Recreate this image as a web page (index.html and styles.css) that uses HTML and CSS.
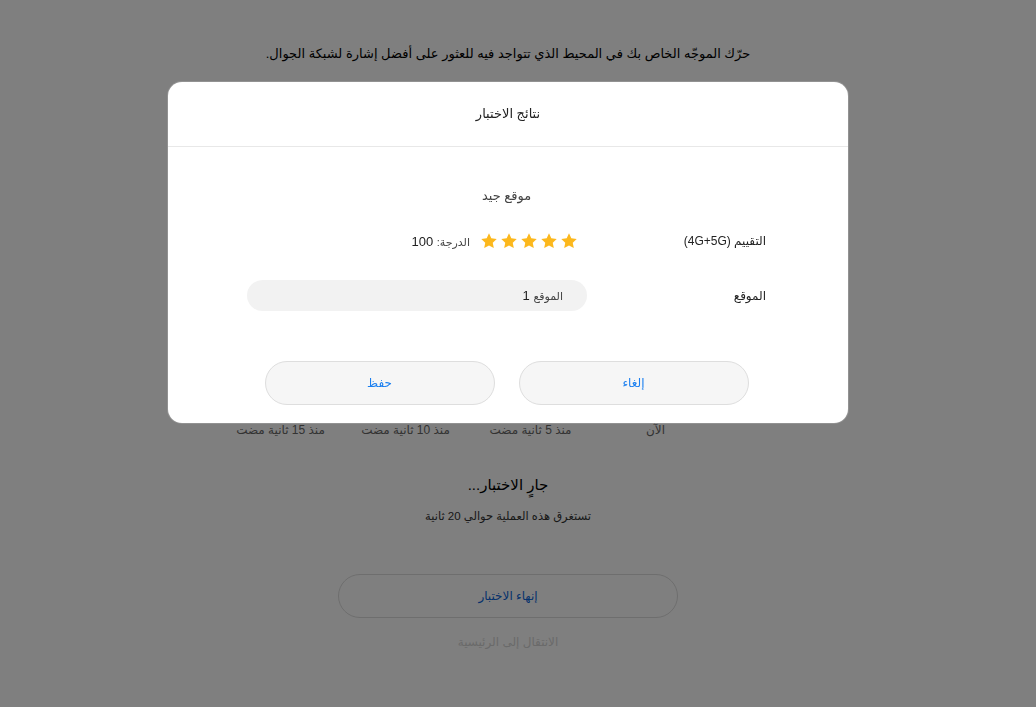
FILE: index.html
```html
<!DOCTYPE html>
<html lang="ar" dir="rtl">
  <head>
    <meta charset="UTF-8" />
    <meta name="viewport" content="width=device-width, initial-scale=1.0" />
    <title>اختبار الشبكة</title>
    <link rel="stylesheet" href="styles.css">
  </head>
  <body>
    <div class="testpage">
      <p class="intro">
        حرّك الموجّه الخاص بك في المحيط الذي تتواجد فيه للعثور على أفضل إشارة لشبكة الجوال.
      </p>
      <div class="chart">
        <div class="plot"></div>
        <div class="times">
          <span>الآن</span>
          <span>منذ 5 ثانية مضت</span>
          <span>منذ 10 ثانية مضت</span>
          <span>منذ 15 ثانية مضت</span>
        </div>
      </div>
      <div class="status">جارٍ الاختبار...</div>
      <div class="hint">تستغرق هذه العملية حوالي 20 ثانية</div>
      <button class="endbtn">إنهاء الاختبار</button>
      <a class="homelink">الانتقال إلى الرئيسية</a>
    </div>

    <div class="mask">
      <div class="dialog">
        <div class="dialog-head">نتائج الاختبار</div>
        <div class="dialog-body">
          <div class="verdict">موقع جيد</div>
          <div class="row">
            <div class="label">التقييم (4G+5G)</div>
            <div class="value">
              <span class="stars">
                <svg viewBox="0 0 24 24"><path d="M12 1.8l3.1 6.6 7.2.9-5.3 5 1.4 7.1L12 17.9l-6.4 3.5 1.4-7.1-5.3-5 7.2-.9z"/></svg>
                <svg viewBox="0 0 24 24"><path d="M12 1.8l3.1 6.6 7.2.9-5.3 5 1.4 7.1L12 17.9l-6.4 3.5 1.4-7.1-5.3-5 7.2-.9z"/></svg>
                <svg viewBox="0 0 24 24"><path d="M12 1.8l3.1 6.6 7.2.9-5.3 5 1.4 7.1L12 17.9l-6.4 3.5 1.4-7.1-5.3-5 7.2-.9z"/></svg>
                <svg viewBox="0 0 24 24"><path d="M12 1.8l3.1 6.6 7.2.9-5.3 5 1.4 7.1L12 17.9l-6.4 3.5 1.4-7.1-5.3-5 7.2-.9z"/></svg>
                <svg viewBox="0 0 24 24"><path d="M12 1.8l3.1 6.6 7.2.9-5.3 5 1.4 7.1L12 17.9l-6.4 3.5 1.4-7.1-5.3-5 7.2-.9z"/></svg>
              </span>
              <span class="score"><small>الدرجة:</small> 100</span>
            </div>
          </div>
          <div class="row">
            <div class="label">الموقع</div>
            <div class="value">
              <div class="field"><small>الموقع</small> 1</div>
            </div>
          </div>
          <div class="actions">
            <button class="btn">إلغاء</button>
            <button class="btn">حفظ</button>
          </div>
        </div>
      </div>
    </div>
  </body>
</html>
```

FILE: styles.css
```css
body {
  margin: 0;
  background: #fff;
  font-family: "Liberation Sans", "DejaVu Sans", sans-serif;
  color: #000;
}
.testpage {
  display: flex;
  flex-direction: column;
  align-items: center;
  padding-top: 45px;
  padding-right: 20px;
}
.intro {
  margin: 0;
  font-size: 13px;
  line-height: 18px;
}
.chart {
  width: 600px;
}
.plot {
  height: 359px;
}
.times {
  display: flex;
  padding-right: 90px;
  font-size: 12px;
  line-height: 16px;
  color: #666;
}
.times span {
  width: 125px;
  text-align: center;
}
.status {
  margin-top: 37px;
  font-size: 15px;
  line-height: 20px;
}
.hint {
  margin-top: 13px;
  font-size: 11.5px;
  line-height: 16px;
  color: #333;
}
.endbtn {
  margin-top: 50px;
  width: 340px;
  height: 44px;
  border: 1px solid #dcdcdc;
  border-radius: 22px;
  background: #fff;
  color: #0a64d8;
  font-family: inherit;
  font-size: 12px;
}
.homelink {
  margin-top: 17px;
  font-size: 12px;
  color: #d4d4d4;
}
.mask {
  position: fixed;
  inset: 0;
  background: rgba(0, 0, 0, 0.5);
  display: flex;
  justify-content: center;
  align-items: flex-start;
  padding-top: 82px;
  padding-right: 20px;
}
.dialog {
  width: 680px;
  background: #fff;
  border-radius: 14px;
  box-shadow: 0 0 0 1px rgba(255, 255, 255, 0.15);
}
.dialog-head {
  height: 64px;
  line-height: 64px;
  text-align: center;
  font-size: 13px;
  color: #222;
  border-bottom: 1px solid #e8e8e8;
}
.dialog-body {
  padding: 0 82px 18px 79px;
}
.verdict {
  padding-top: 40px;
  text-align: center;
  font-size: 13px;
  line-height: 18px;
  color: #444;
}
.row {
  display: flex;
  align-items: center;
  margin-top: 27px;
  font-size: 13px;
  color: #222;
}
.row + .row {
  margin-top: 30px;
}
.label {
  width: 179px;
  font-size: 12px;
}
.value {
  flex: 1;
  display: flex;
  align-items: center;
  gap: 10px;
}
.stars {
  display: flex;
  gap: 2px;
  padding-right: 9px;
}
.stars svg {
  width: 18px;
  height: 18px;
  fill: #fcb81d;
}
.score small,
.field small {
  font-size: 11px;
  color: #444;
}
.field {
  width: 340px;
  height: 31px;
  line-height: 31px;
  box-sizing: border-box;
  padding-right: 24px;
  background: #f2f2f2;
  border-radius: 16px;
}
.actions {
  display: flex;
  justify-content: center;
  gap: 24px;
  margin-top: 50px;
}
.btn {
  width: 230px;
  height: 44px;
  border: 1px solid #dedede;
  border-radius: 22px;
  background: #f6f6f6;
  color: #1a7ff0;
  font-family: inherit;
  font-size: 12px;
}
```
